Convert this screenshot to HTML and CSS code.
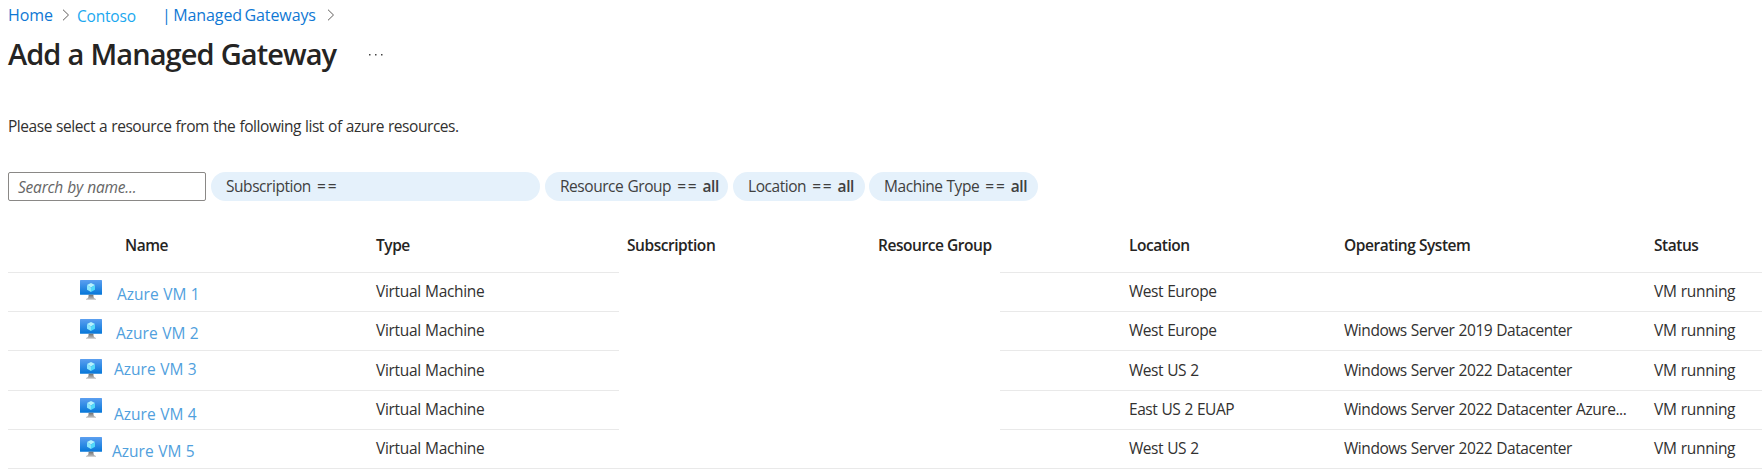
FILE: index.html
```html
<!DOCTYPE html>
<html lang="en">
<head>
<meta charset="utf-8">
<title>Add a Managed Gateway</title>
<link rel="stylesheet" href="styles.css">
</head>
<body>
<svg class="defs" width="0" height="0" aria-hidden="true">
  <defs>
    <linearGradient id="screen" x1="0" y1="0" x2="0" y2="1"><stop offset="0" stop-color="#5c9ff0"/><stop offset="1" stop-color="#0577d9"/></linearGradient>
    <linearGradient id="stand" x1="0" y1="0" x2="0" y2="1"><stop offset="0" stop-color="#707070"/><stop offset="1" stop-color="#c4c4c4"/></linearGradient>
    <symbol id="vm" viewBox="0 0 22 20">
      <rect width="22" height="14.7" rx=".5" fill="url(#screen)"/>
      <path d="M8.6 14.7h4.8c0 2.600.5 3.700 2.600 4.300v.8H6v-.8c2.100-.6 2.600-1.700 2.600-4.300z" fill="url(#stand)"/>
      <path d="M11 2.900l4 2.200-4 2.300-4-2.300z" fill="#b5f2fd"/>
      <path d="M7 5.100l4 2.300v4.600L7 9.700z" fill="#8ae5fb"/>
      <path d="M15 5.100l-4 2.300v4.600l4-2.300z" fill="#50d9fa"/>
    </symbol>
  </defs>
</svg>
<nav class="crumbs">
  <a class="home">Home</a>
  <svg class="chev" viewBox="0 0 8 12"><path d="M1 .7 6.500 6 1 11.300"/></svg>
  <a class="tenant">Contoso</a>
  <a class="gateways">| Managed Gateways</a>
  <svg class="chev" viewBox="0 0 8 12"><path d="M1 .7 6.500 6 1 11.300"/></svg>
</nav>
<header class="heading">
  <h1>Add a Managed Gateway</h1>
  <svg class="more" viewBox="0 0 14 2"><path d="M0 0h1.500v1.500H0zM6 0h1.500v1.500H6zM12 0h1.500v1.500H12z"/></svg>
</header>
<p class="intro">Please select a resource from the following list of azure resources.</p>
<div class="filters">
  <div class="search">Search by name...</div>
  <div class="pill p-sub">Subscription <i>==</i></div>
  <div class="pill p-rg">Resource Group <i>==</i> <b>all</b></div>
  <div class="pill p-loc">Location <i>==</i> <b>all</b></div>
  <div class="pill p-type">Machine Type <i>==</i> <b>all</b></div>
</div>
<main class="table">
  <div class="row head"><span class="name">Name</span><span>Type</span><span>Subscription</span><span>Resource Group</span><span>Location</span><span>Operating System</span><span>Status</span></div>
  <div class="row"><span class="vm"><svg><use href="#vm"/></svg><a class="n1">Azure VM 1</a></span><span class="type">Virtual Machine</span><span></span><span></span><span>West Europe</span><span></span><span class="status">VM running</span></div>
  <div class="row"><span class="vm"><svg><use href="#vm"/></svg><a class="n2">Azure VM 2</a></span><span class="type">Virtual Machine</span><span></span><span></span><span>West Europe</span><span>Windows Server 2019 Datacenter</span><span class="status">VM running</span></div>
  <div class="row tall"><span class="vm"><svg><use href="#vm"/></svg><a class="n3">Azure VM 3</a></span><span class="type">Virtual Machine</span><span></span><span></span><span>West US 2</span><span>Windows Server 2022 Datacenter</span><span class="status">VM running</span></div>
  <div class="row"><span class="vm"><svg><use href="#vm"/></svg><a class="n4">Azure VM 4</a></span><span class="type">Virtual Machine</span><span></span><span></span><span>East US 2 EUAP</span><span>Windows Server 2022 Datacenter Azure...</span><span class="status">VM running</span></div>
  <div class="row last"><span class="vm"><svg><use href="#vm"/></svg><a class="n5">Azure VM 5</a></span><span class="type">Virtual Machine</span><span></span><span></span><span>West US 2</span><span>Windows Server 2022 Datacenter</span><span class="status">VM running</span></div>
</main>
</body>
</html>
```
FILE: styles.css
```css
* { box-sizing: border-box; }
body {
  margin: 0;
  height: 469px;
  overflow: hidden;
  background: #fff;
  color: #323130;
  font: 15.5px/20px "Open Sans", "Noto Sans", sans-serif;
  letter-spacing: -0.45px;
  word-spacing: 0.5px;
  white-space: nowrap;
}
.defs { display: block; height: 0; }
.crumbs {
  display: flex;
  align-items: center;
  height: 30px;
  padding-left: 8px;
  color: #0f78d4;
  font-size: 16px;
}
.home { width: 54px; letter-spacing: -0.1px; }
.tenant { width: 85px; color: #1ba8ef; margin-left: 7px; padding-top: 1px; font-size: 15.5px; letter-spacing: -0.2px; }
.gateways { width: 165px; letter-spacing: -0.1px; word-spacing: -1.5px; }
.chev { width: 8px; height: 12px; fill: none; stroke: #605e5c; stroke-width: 1; }
.heading { display: flex; align-items: center; height: 48px; padding-left: 8px; }
h1 {
  width: 361px;
  margin: 0;
  color: #252423;
  font-size: 29px;
  font-weight: 600;
  line-height: 40px;
  letter-spacing: -0.94px;
}
.more { width: 14px; height: 2px; margin-top: 2px; fill: #444; }
.intro { margin: 38px 0 0 8px; letter-spacing: -0.45px; word-spacing: 0.5px; }
.filters { display: flex; height: 29px; margin: 36px 0 0 8px; }
.search {
  flex: 0 0 198px;
  padding: 4px 0 0 9px;
  border: 1px solid #8a8886;
  border-radius: 2px;
  color: #666;
  font-style: italic;
  letter-spacing: -0.22px;
}
.pill { padding: 4px 0 0 15px; border-radius: 15px; background: #e5f1fb; color: #40403f; }
.pill i { margin: 0 0 0 2px; font-style: normal; letter-spacing: 1.8px; }
.pill b { font-weight: 600; }
.p-sub { width: 329px; margin-left: 5px; }
.p-rg { width: 183px; margin-left: 5px; }
.p-loc { width: 132px; margin-left: 5px; }
.p-type { width: 169px; margin-left: 4px; }
.table { padding-left: 8px; }
.row {
  display: grid;
  grid-template-columns: 368px 251px 251px 251px 215px 310px auto;
  align-items: start;
  height: 39px;
  padding-top: 8px;
  background: linear-gradient(#e9e9e9, #e9e9e9) left bottom / 611px 1px no-repeat,
              linear-gradient(#e9e9e9, #e9e9e9) 992px bottom / 762px 1px no-repeat;
}
.head { height: 72px; padding-top: 34px; color: #252423; font-weight: 600; word-spacing: 0; }
.head .name { padding-left: 117px; }
.tall { height: 40px; padding-top: 9px; }
.last { background: linear-gradient(#e9e9e9, #e9e9e9) left bottom / 100% 1px no-repeat; }
.type, .status { letter-spacing: -0.32px; }
.vm { display: flex; padding-left: 72px; color: #50a0dd; height: 20px; letter-spacing: 0; }
.vm svg { width: 22px; height: 20px; margin-top: -1px; }
.n1 { margin: 3px 0 0 15px; }
.n2 { margin: 3px 0 0 14px; }
.n3 { margin: -1px 0 0 12px; }
.n4 { margin: 5px 0 0 12px; }
.n5 { margin: 3px 0 0 10px; }
```
